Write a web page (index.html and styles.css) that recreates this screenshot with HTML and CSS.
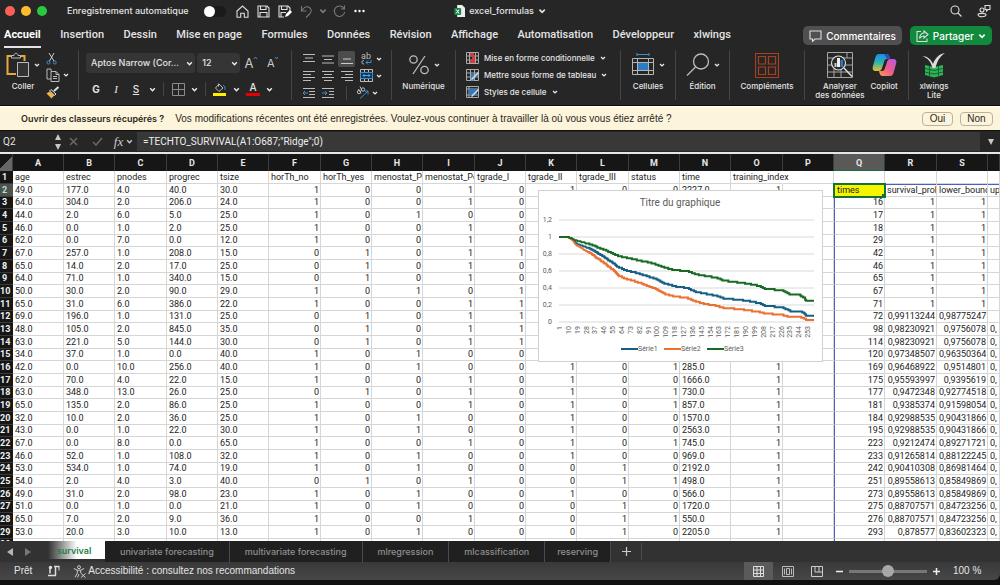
FILE: index.html
```html
<!DOCTYPE html>
<html lang="fr">
<head>
  <meta charset="UTF-8">
  <meta name="viewport" content="width=device-width, initial-scale=1.0">
  <title>excel_formulas</title>
  <link rel="stylesheet" href="styles.css">
</head>
<body>

  <!-- shared icons -->
  <svg class="sprite" aria-hidden="true">
    <symbol id="chev" viewBox="0 0 6 6"><path d="M1 2l2 2 2-2" fill="none" stroke="currentColor" stroke-width="1.2"/></symbol>
    <symbol id="lines-center" viewBox="0 0 14 12"><path d="M1 1.5h12M3 4.5h8M1 7.5h12M3 10.5h8" stroke="currentColor" fill="none"/></symbol>
    <symbol id="lines-left" viewBox="0 0 14 12"><path d="M1 1.5h12M1 4.5h8M1 7.5h12M1 10.5h8" stroke="currentColor" fill="none"/></symbol>
    <symbol id="lines-right" viewBox="0 0 14 12"><path d="M1 1.5h12M5 4.5h8M1 7.5h12M5 10.5h8" stroke="currentColor" fill="none"/></symbol>
  </svg>

  <header class="titlebar">
    <div class="lights"><span class="red"></span><span class="yellow"></span><span class="green"></span></div>
    <label for="autosave" class="autosave-label">Enregistrement automatique</label>
    <input type="checkbox" id="autosave" class="switch">
    <div class="quick">
      <button aria-label="Accueil"><svg width="13" height="13" viewBox="0 0 13 13"><path d="M1 6l5.500-5L12 6v6.300H8.300V8.200H4.700v4.100H1z"/></svg></button>
      <button aria-label="Enregistrer"><svg width="13" height="13" viewBox="0 0 13 13"><path d="M1 1h9l2 2v9H1zM3.500 1v3.500h5.500V1M3 12V7.500h7V12"/></svg></button>
      <button aria-label="Enregistrer sous"><svg width="14" height="13" viewBox="0 0 14 13"><path d="M6 12H1V1h9l2 2v3M3.500 1v3.500h5.500V1M3 12V7.500h5"/><path d="M7 12l1-3 4-4 2 2-4 4z" class="solid"/></svg></button>
      <button aria-label="Annuler" class="off"><svg width="13" height="13" viewBox="0 0 13 13"><path d="M1.500 1v5h5M1.500 6C4 2 7 1 9.500 2.500 12 4.500 11.500 7 9.500 9L6 12.500"/></svg></button>
      <button aria-label="Options d'annulation" class="off tight"><svg width="8" height="8"><use href="#chev"/></svg></button>
      <button aria-label="Rétablir" class="off"><svg width="13" height="13" viewBox="0 0 13 13"><path d="M11 3.500A5.200 5.200 0 1 0 11.700 7M11.500.500v3.500H8"/></svg></button>
      <button aria-label="Plus"><svg width="11" height="4" viewBox="0 0 11 4"><circle cx="1.500" cy="2" r="1.200" class="solid dot"/><circle cx="5.500" cy="2" r="1.200" class="solid dot"/><circle cx="9.500" cy="2" r="1.200" class="solid dot"/></svg></button>
    </div>
    <button class="doc">
      <svg width="11" height="12" viewBox="0 0 11 12"><path d="M3 0h5l3 3v9H3z" fill="#eee"/><rect y="3" width="7" height="7" rx="1" fill="#17864a"/><path d="M2 4.500l3 4M5 4.500l-3 4" stroke="#fff"/></svg>
      <span>excel_formulas</span>
      <svg width="8" height="8"><use href="#chev"/></svg>
    </button>
    <div class="title-tools">
      <button aria-label="Rechercher"><svg width="12" height="12" viewBox="0 0 12 12"><circle cx="5" cy="5" r="4"/><path d="M8 8l3.500 3.500"/></svg></button>
      <button aria-label="Compte"><svg width="14" height="14" viewBox="0 0 14 14"><circle cx="5" cy="6" r="2"/><path d="M1 10.500c0-1.500 8-1.500 8 0 0 3-8 3-8 0zM8 1.500h5v4h-2L9.500 7V5.500H8z"/></svg></button>
    </div>
  </header>

  <div class="menu">
    <nav>
      <a href="#" class="current">Accueil</a>
      <a href="#">Insertion</a>
      <a href="#">Dessin</a>
      <a href="#">Mise en page</a>
      <a href="#">Formules</a>
      <a href="#">Données</a>
      <a href="#">Révision</a>
      <a href="#">Affichage</a>
      <a href="#">Automatisation</a>
      <a href="#">Développeur</a>
      <a href="#">xlwings</a>
    </nav>
    <button class="comments"><svg width="13" height="12" viewBox="0 0 13 12"><path d="M1 1h11v8H6l-2.500 2.500V9H1z"/></svg>Commentaires</button>
    <button class="share"><svg width="13" height="12" viewBox="0 0 13 12"><path d="M5 1.500H1v10h10V8.500M8 1l4 3.500L8 8V6C5.500 6 4.500 7 3.500 8.500 4 5 5.500 3 8 3z"/></svg>Partager<svg width="8" height="8"><use href="#chev"/></svg></button>
  </div>

  <div class="ribbon">
    <section class="group g-clipboard">
      <button class="big">
        <span class="pic">
          <svg width="24" height="26" viewBox="0 0 24 26"><path d="M6 4H1.500v18H10M14 4h4.500v5" fill="none" stroke="#e5a93a" stroke-width="2"/><path d="M5.500 6V3.500h2.500C8 .500 12 .500 12 3.500h2.500V6z" fill="#262626" stroke="#bbb"/><path d="M11.500 10.500h11v14h-11z" fill="#333" stroke="#bbb"/></svg>
          <svg class="chev" width="6" height="6"><use href="#chev"/></svg>
        </span>
        <span>Coller</span>
      </button>
      <div class="stack">
        <button aria-label="Couper"><svg width="12" height="13" viewBox="0 0 12 13"><path d="M3 1l5 8M8 1L3.500 9" fill="none" stroke="#ccc"/><circle cx="2.500" cy="10.500" r="1.500" fill="none" stroke="#3c8fd0"/><circle cx="8.800" cy="10.500" r="1.500" fill="none" stroke="#3c8fd0"/></svg></button>
        <button aria-label="Copier"><svg width="14" height="14" viewBox="0 0 14 14"><path d="M5 3V1H1v10h4M5 3.500h5l3 3v7H5zM10 3.500v3h3M7 8.500h4M7 10.500h4" fill="none" stroke="#bbb"/></svg><svg class="chev" width="6" height="6"><use href="#chev"/></svg></button>
        <button aria-label="Reproduire la mise en forme"><svg width="14" height="13" viewBox="0 0 14 13"><path d="M12.500 1L8 5" stroke="#ddd" stroke-width="2"/><path d="M5 3.500l5 4.500-1.500 1.500-5-4.500z" fill="#333" stroke="#ddd"/><path d="M3.500 5.500L.500 7.500 5.500 12.500l3-3.500z" fill="#edb548"/></svg></button>
      </div>
    </section>

    <section class="group g-font">
      <div class="line">
        <div class="combo wide">
          <select aria-label="Police"><option>Aptos Narrow (Cor...</option></select>
          <svg class="chev" width="7" height="7"><use href="#chev"/></svg>
        </div>
        <div class="combo">
          <select aria-label="Taille"><option>12</option></select>
          <svg class="chev" width="7" height="7"><use href="#chev"/></svg>
        </div>
        <button class="glyph grow" aria-label="Agrandir la police">A<svg width="5" height="5" viewBox="0 0 5 5"><path d="M1 3l1.500-2L4 3" fill="none" stroke="#3c8fd0"/></svg></button>
        <button class="glyph shrink" aria-label="Réduire la police">A<svg width="5" height="5" viewBox="0 0 5 5"><path d="M1 1l1.500 2L4 1" fill="none" stroke="#3c8fd0"/></svg></button>
      </div>
      <div class="line styles">
        <button class="bold">G</button>
        <button class="ital">I</button>
        <button class="under">S</button>
        <svg class="chev" width="7" height="7"><use href="#chev"/></svg>
        <i class="bar"></i>
        <button aria-label="Bordures"><svg width="13" height="13" viewBox="0 0 13 13"><path d="M.500.500h12v12H.500zM6.500.500v12M.500 6.500h12" fill="none" stroke="#8c8c8c"/></svg></button>
        <svg class="chev" width="7" height="7"><use href="#chev"/></svg>
        <i class="bar"></i>
        <button aria-label="Couleur de remplissage"><svg width="14" height="14" viewBox="0 0 14 14"><path d="M6 2l4 4-4 3.500L2.500 6zM5.500 1.500v3" fill="none" stroke="#bbb"/><path d="M10 3c2 1 2 3 2 5" fill="none" stroke="#3c8fd0"/><path d="M0 11h13v3H0z" fill="#ffef00"/></svg></button>
        <svg class="chev" width="7" height="7"><use href="#chev"/></svg>
        <button class="font-color" aria-label="Couleur de police">A</button>
        <svg class="chev" width="7" height="7"><use href="#chev"/></svg>
      </div>
    </section>

    <section class="group g-align">
      <button aria-label="Aligner en haut"><svg width="14" height="12" viewBox="0 0 14 12"><path d="M1 1.500h12M3 5h8M1 8.500h12" stroke="#bbb"/></svg></button>
      <button aria-label="Aligner au milieu"><svg width="14" height="12" viewBox="0 0 14 12"><path d="M1 3h12M3 6.500h8M1 10h12" stroke="#bbb"/></svg></button>
      <button class="pressed" aria-label="Aligner en bas"><svg width="14" height="14" viewBox="0 0 14 14"><path d="M3 7h8M1 11.500h12" stroke="#ccc"/></svg></button>
      <button aria-label="Renvoyer à la ligne" class="wrap">ab<svg width="12" height="5" viewBox="0 0 12 5"><path d="M4 .500c-3 0-3 3.500 0 3.500" fill="none" stroke="#bbb"/><path d="M11 0v2.500H6M8 .500l-2 2 2 2" fill="none" stroke="#3c8fd0"/></svg></button>
      <svg class="chev" width="6" height="6"><use href="#chev"/></svg>

      <button aria-label="Aligner à gauche"><svg width="14" height="12"><use href="#lines-left"/></svg></button>
      <button aria-label="Centrer"><svg width="14" height="12"><use href="#lines-center"/></svg></button>
      <button aria-label="Aligner à droite"><svg width="14" height="12"><use href="#lines-right"/></svg></button>
      <button aria-label="Fusionner"><svg width="13" height="13" viewBox="0 0 13 13"><path d="M.500.500h12v12H.500zM4.500.500v3M8.500.500v3M4.500 9.500v3M8.500 9.500v3" fill="none" stroke="#bbb"/><path d="M.500 3.500h12v6H.500z" fill="#17354d" stroke="#3c8fd0"/><path d="M3 6.500h7M4.500 5L3 6.500 4.500 8M8.500 5L10 6.500 8.500 8" fill="none" stroke="#4aa3e6"/></svg></button>
      <svg class="chev" width="6" height="6"><use href="#chev"/></svg>

      <button aria-label="Diminuer le retrait"><svg width="14" height="12" viewBox="0 0 14 12"><path d="M1 1.500h12M7 4.500h6M7 7.500h6M1 10.500h12" stroke="#bbb"/><path d="M1 6h5M3 4L1 6l2 2" fill="none" stroke="#3c8fd0"/></svg></button>
      <button aria-label="Augmenter le retrait"><svg width="14" height="12" viewBox="0 0 14 12"><path d="M1 1.500h12M8 4.500h5M8 7.500h5M1 10.500h12" stroke="#bbb"/><path d="M1 6h5M4 4l2 2-2 2" fill="none" stroke="#3c8fd0"/></svg></button>
      <i class="bar"></i>
      <button aria-label="Orientation" class="orient"><svg width="13" height="13" viewBox="0 0 13 13"><g fill="none" stroke="#bbb"><circle cx="3" cy="6" r="1.700"/><path d="M2.500 3l2.500 4.500"/><circle cx="7" cy="3.500" r="1.700"/><path d="M4 .500l2 4"/></g><path d="M4 12.500L12 5M8.500 5H12v3.500" fill="none" stroke="#3c8fd0"/></svg><svg class="chev" width="6" height="6"><use href="#chev"/></svg></button>
    </section>

    <section class="group g-number">
      <button class="big">
        <span class="pic"><svg width="22" height="22" viewBox="0 0 22 22"><g fill="none" stroke="#bdbdbd" stroke-width="1.300"><circle cx="5.500" cy="5.500" r="3.700"/><circle cx="16.500" cy="16" r="3.700"/><path d="M17 2L5 20"/></g></svg>
          <svg class="chev" width="6" height="6"><use href="#chev"/></svg></span>
        <span>Numérique</span>
      </button>
    </section>

    <section class="group g-styles">
      <button><svg width="13" height="12" viewBox="0 0 13 12"><path d="M.500.500h12v11H.500zM.500 4h12M.500 8h12M3.500.500v11M9.500.500v11" fill="none" stroke="#aaa"/><path d="M4 1h4v3H4zM6 4h3v4H6zM4 8h5v3H4z" fill="#d33b3f"/></svg>Mise en forme conditionnelle<svg class="chev" width="6" height="6"><use href="#chev"/></svg></button>
      <button><svg width="13" height="12" viewBox="0 0 13 12"><path d="M.500.500h12v11H.500zM.500 4h12M.500 8h12M4.500.500v11M8.500.500v11" fill="none" stroke="#aaa"/><path d="M5 4.500h3V8H5zM9 4.500h3V8H9zM5 8.500h3v3H5z" fill="#2b7cc4"/><path d="M12.500 3.500l-7 7" stroke="#ddd" stroke-width="1.500"/></svg>Mettre sous forme de tableau<svg class="chev" width="6" height="6"><use href="#chev"/></svg></button>
      <button><svg width="13" height="12" viewBox="0 0 13 12"><path d="M.500.500h12v11H.500zM.500 3h12M.500 9h12M3 .500v11" fill="none" stroke="#aaa"/><path d="M3 3h8v6H3z" fill="#2b7cc4"/><path d="M12.500 3.500l-7 7" stroke="#ddd" stroke-width="1.500"/></svg>Styles de cellule<svg class="chev" width="6" height="6"><use href="#chev"/></svg></button>
    </section>

    <section class="group g-cells">
      <button class="big">
        <span class="pic"><svg width="24" height="24" viewBox="0 0 24 24"><path d="M6 1.500h12M6 0v3M18 0v3" fill="none" stroke="#3c8fd0"/><path d="M1.500 5.500h21v16h-21zM1.500 9.500h21M1.500 17.500h21M6.500 5.500v16M17.500 5.500v16" fill="none" stroke="#b5b5b5"/><path d="M7 10h10v7H7z" fill="#2b7cc4"/></svg>
          <svg class="chev" width="6" height="6"><use href="#chev"/></svg></span>
        <span>Cellules</span>
      </button>
    </section>

    <section class="group g-edit">
      <button class="big">
        <span class="pic"><svg width="24" height="24" viewBox="0 0 24 24"><circle cx="15" cy="8.500" r="7.500" fill="none" stroke="#bdbdbd" stroke-width="1.300"/><path d="M9.500 14L1 22.500" stroke="#bdbdbd" stroke-width="1.300"/></svg>
          <svg class="chev" width="6" height="6"><use href="#chev"/></svg></span>
        <span>Édition</span>
      </button>
    </section>

    <section class="group g-addins">
      <button class="big">
        <span class="pic"><svg width="24" height="25" viewBox="0 0 24 25"><path d="M.500.500h23v24H.500zM3.500 3.500h7v7.500h-7zM13.500 3.500h7v7.500h-7zM3.500 14h7v7.500h-7zM13.500 14h7v7.500h-7z" fill="none" stroke="#a8401f" stroke-width="1.200"/></svg></span>
        <span>Compléments</span>
      </button>
    </section>

    <section class="group g-analyse">
      <button class="big">
        <span class="pic"><svg width="26" height="26" viewBox="0 0 26 26"><path d="M.500.500h25v25H.500zM.500 6h25M.500 13h25M.500 20h25M7 13v13M14 18v8M20 0v6" fill="none" stroke="#a5a5a5"/><circle cx="11.500" cy="11" r="7" fill="#2b2b2b" stroke="#ddd" stroke-width="1.200"/><path d="M7.500 11h2v4h-2z" fill="#ccc"/><path d="M10 6h3v9h-3z" fill="#eee"/><path d="M13.500 8h2.500v7h-2.500z" fill="#2b7cc4"/><path d="M17 16l8 8.500" stroke="#ddd" stroke-width="1.500"/></svg></span>
        <span>Analyser<br>des données</span>
      </button>
      <button class="big">
        <span class="pic"><svg width="25" height="24" viewBox="0 0 25 24">
          <defs>
            <linearGradient id="cp1" x1="0" y1="0" x2="0" y2="1"><stop offset="0" stop-color="#1c8de8"/><stop offset=".5" stop-color="#29b6b0"/><stop offset="1" stop-color="#e9c02c"/></linearGradient>
            <linearGradient id="cp2" x1="1" y1="0" x2="0" y2="1"><stop offset="0" stop-color="#b457e8"/><stop offset=".5" stop-color="#ee5a8d"/><stop offset="1" stop-color="#fb9a4a"/></linearGradient>
          </defs>
          <path d="M7 1h7.500c2 0 2.500 1.500 3 3l.500 2h-3c-2 0-2.500 1-3 3l-2 6c-.500 2-1.500 3-3.500 3H4c-3 0-4-2-3-5L3.500 4C4.200 2 5 1 7 1z" fill="url(#cp1)"/>
          <path d="M18 23h-7.500c-2 0-2.500-1.500-3-3L7 18h3c2 0 2.500-1 3-3l2-6c.500-2 1.500-3 3.500-3H21c3 0 4 2 3 5l-2.500 9c-.700 2-1.500 3-3.500 3z" fill="url(#cp2)"/>
          <path d="M12 1h3c1.500 0 2 1.500 2.500 3l.500 2h-3z" fill="#2451c9"/>
        </svg></span>
        <span>Copilot</span>
      </button>
    </section>

    <section class="group g-xlwings">
      <button class="big">
        <span class="pic"><svg width="24" height="25" viewBox="0 0 24 25"><path d="M3 12l9 2 9-2v10l-9 2.500L3 22z" fill="#2db457"/><path d="M3 15.500l9 2 9-2M3 19l9 2 9-2M7.500 13v11M16.500 13v11" fill="none" stroke="#17612f"/><path d="M0 3c5 0 9 3 11 8 2-6 6-10 12-11-6 4-8 9-9.500 15h-3C9 9 6 5 0 3z" fill="#dcdcdc"/></svg></span>
        <span>xlwings<br>Lite</span>
      </button>
    </section>
  </div>

  <div class="banner">
    <strong>Ouvrir des classeurs récupérés ?</strong>
    <span>Vos modifications récentes ont été enregistrées. Voulez-vous continuer à travailler là où vous vous étiez arrêté ?</span>
    <button>Oui</button>
    <button>Non</button>
  </div>

  <div class="formula-bar">
    <input class="name-box" aria-label="Zone de nom" value="Q2">
    <svg width="6" height="16" viewBox="0 0 6 16"><path d="M3 0l3 6H0zM3 16l3-6H0z" fill="#c8c8c8"/></svg>
    <button aria-label="Annuler"><svg width="9" height="9" viewBox="0 0 9 9"><path d="M1 1l7 7M8 1L1 8" stroke="#686868" stroke-width="1.500"/></svg></button>
    <button aria-label="Valider"><svg width="11" height="9" viewBox="0 0 11 9"><path d="M1 5l3 3 6-7" fill="none" stroke="#686868" stroke-width="1.500"/></svg></button>
    <button class="fx">fx<svg width="7" height="7"><use href="#chev"/></svg></button>
    <input class="formula" aria-label="Formule" value='=TECHTO_SURVIVAL(A1:O687;"Ridge";0)'>
    <button class="expand" aria-label="Développer"><svg width="6" height="6" viewBox="0 0 6 6"><path d="M0 0h6L3 6z" fill="#c8c8c8"/></svg></button>
  </div>

  <main class="sheet">
    <table>
      <thead><tr id="columns"></tr></thead>
      <tbody id="rows"></tbody>
    </table>
    <svg id="chart" class="chart" viewBox="0 0 283 170" role="img" aria-label="Titre du graphique"></svg>
  </main>

  <div class="sheet-tabs">
    <div class="arrows">
      <button aria-label="Précédent"><svg width="6" height="8" viewBox="0 0 6 8"><path d="M6 0v8L0 4z" fill="#b5b5b5"/></svg></button>
      <button aria-label="Suivant"><svg width="6" height="8" viewBox="0 0 6 8"><path d="M0 0v8l6-4z" fill="#777"/></svg></button>
    </div>
    <button class="tab active">survival</button>
    <button class="tab">univariate forecasting</button>
    <button class="tab">multivariate forecasting</button>
    <button class="tab">mlregression</button>
    <button class="tab">mlcassification</button>
    <button class="tab last">reserving</button>
    <button class="add" aria-label="Nouvelle feuille"><svg width="9" height="9" viewBox="0 0 9 9"><path d="M4.500 0v9M0 4.500h9" stroke="#ccc" stroke-width="1.200"/></svg></button>
  </div>

  <footer class="status">
    <span>Prêt</span>
    <svg class="macro" width="12" height="12" viewBox="0 0 12 12"><path d="M2 2.500v6M0 10.500h8M6 1.500h5.500M7.500 2v8.500" fill="none" stroke="#ddd" stroke-width="1.500"/><circle cx="2.500" cy="2.500" r="1.700" fill="#ddd"/><path d="M11 1.500v4" stroke="#ddd"/></svg>
    <svg width="13" height="13" viewBox="0 0 13 13"><g fill="none" stroke="#ccc"><circle cx="6" cy="2.200" r="1.500"/><path d="M.800 3.500l3.500 1.700v3L2 12.200M11.200 3.500L7.700 5.200v3M4.300 5.200h3.400M6 9l-1.500 3.500M8 8.500l4.500 4M12.500 8.500l-4.500 4"/></g></svg>
    <span class="access">Accessibilité : consultez nos recommandations</span>
    <div class="views">
      <button class="on" aria-label="Normal"><svg width="11" height="11" viewBox="0 0 11 11"><path d="M.500.500h10v10H.500zM.500 4h10M.500 7.500h10M4 .500v10M7.500.500v10" fill="none" stroke="#ddd"/></svg></button>
      <button aria-label="Mise en page"><svg width="12" height="11" viewBox="0 0 12 11"><path d="M.500.500h11v10H.500zM2.500 2.500v6M9.500 2.500v6M4.500 2.500h3v6h-3z" fill="none" stroke="#bbb"/></svg></button>
      <button aria-label="Sauts de page"><svg width="12" height="11" viewBox="0 0 12 11"><path d="M.500.500h11v10H.500zM4 .500V6h4V.500M8 6h3.500" fill="none" stroke="#ccc"/></svg></button>
    </div>
    <button class="zoom-btn" aria-label="Zoom arrière"><svg width="7" height="7" viewBox="0 0 7 7"><path d="M0 3.500h7" stroke="#eee" stroke-width="1.500"/></svg></button>
    <input type="range" class="zoom" aria-label="Zoom" min="0" max="100" value="50">
    <button class="zoom-btn" aria-label="Zoom avant"><svg width="7" height="7" viewBox="0 0 7 7"><path d="M0 3.500h7M3.500 0v7" stroke="#eee" stroke-width="1.500"/></svg></button>
    <span class="percent">100 %</span>
  </footer>

  <script src="script.js"></script>
</body>
</html>
```
FILE: styles.css
```css
:root {
  --chrome: #262626;
  --line: #444;
  --text: #e4e4e4;
  --icon: #bbb;
  --grid: #d6d6d6;
  --green: #15703c;
  --ui: Inter, "Liberation Sans", sans-serif;
  --cell: Roboto, "Liberation Sans", sans-serif;
}

* {
  box-sizing: border-box;
}

body {
  display: flex;
  flex-direction: column;
  height: 100vh;
  margin: 0;
  padding-bottom: 5px;
  overflow: hidden;
  background: #101010;
  color: var(--text);
  font: 500 9px/12px var(--ui);
}

button, input, select {
  margin: 0;
  padding: 0;
  border: 0;
  background: none;
  color: inherit;
  font: inherit;
}

button {
  display: flex;
  align-items: center;
  justify-content: center;
  white-space: nowrap;
}

svg {
  flex: none;
  display: block;
}

.sprite {
  position: absolute;
  width: 0;
  height: 0;
}

/* title bar */
.titlebar {
  position: relative;
  display: flex;
  align-items: center;
  height: 22px;
  flex: none;
  padding: 0 9px 0 5px;
  background: var(--chrome);
}

.lights {
  display: flex;
  gap: 6px;
  width: 62px;
}

.lights span {
  width: 10px;
  height: 10px;
  border-radius: 50%;
}

.red { background: #fe5f57; }
.yellow { background: #febc2e; }
.green { background: #28c840; }

.autosave-label {
  width: 137px;
}

.switch {
  appearance: none;
  width: 22px;
  height: 11px;
  border-radius: 6px;
  background: #1a1a1a;
}

.switch::before {
  content: "";
  display: block;
  width: 11px;
  height: 11px;
  border-radius: 50%;
  background: #fff;
}

.quick, .title-tools {
  display: flex;
  align-items: center;
  gap: 8px;
  margin-left: 10px;
}

.quick svg, .title-tools svg, .menu button svg {
  fill: none;
  stroke: #ddd;
  stroke-width: 1.1;
}

.quick .solid {
  fill: #fff;
  stroke: none;
}

.quick .off {
  opacity: .45;
}

.quick .tight {
  margin: 0 -2px;
}

.doc {
  position: absolute;
  left: 50%;
  transform: translateX(-50%);
  gap: 4px;
}

.title-tools {
  gap: 15px;
  margin-left: auto;
}

/* menu */
.menu {
  display: flex;
  align-items: center;
  justify-content: flex-end;
  height: 26px;
  flex: none;
  padding: 1px 8px 0 4px;
  gap: 8px;
  background: var(--chrome);
}

.menu nav {
  display: flex;
  justify-content: space-between;
  flex: 1;
  max-width: 727px;
  margin-right: auto;
}

.menu a {
  padding: 4px 0;
  border-bottom: 2px solid transparent;
  color: var(--text);
  font: 500 11px/14px var(--cell);
  text-decoration: none;
}

.menu .current {
  border-color: #e8dfe8;
  color: #fff;
  font-weight: 700;
}

.menu button {
  height: 19px;
  gap: 4px;
  padding: 0 6px;
  border-radius: 5px;
  background: #505050;
  color: #fff;
  font-size: 10px;
}

.menu .share {
  background: #118a3e;
}

/* ribbon */
.ribbon {
  display: flex;
  height: 58px;
  flex: none;
  padding-top: 2px;
  border-bottom: 1px solid #0c0c0c;
  background: var(--chrome);
  font-size: 8px;
  line-height: 9px;
}

.group {
  display: flex;
  justify-content: center;
  height: 50px;
  flex: none;
  border-right: 1px solid var(--line);
}

.group:last-child {
  border: 0;
}

.chev {
  color: #eee;
}

.big {
  flex-direction: column;
  justify-content: flex-start;
  gap: 2px;
}

.pic {
  display: flex;
  align-items: center;
  gap: 4px;
  height: 30px;
}

.bar {
  width: 1px;
  height: 14px;
  background: var(--line);
}

.g-clipboard { width: 79px; gap: 6px; }
.g-font { width: 213px; }
.g-align { width: 100px; }
.g-number { width: 64px; }
.g-styles { width: 165px; }
.g-cells { width: 55px; }
.g-edit { width: 54px; }
.g-addins { width: 75px; }
.g-analyse { width: 104px; gap: 6px; }
.g-xlwings { width: 50px; }

.stack {
  display: flex;
  flex-direction: column;
  justify-content: space-between;
  width: 26px;
}

.stack button {
  justify-content: flex-start;
  gap: 3px;
  height: 16px;
}

.g-font {
  flex-direction: column;
  justify-content: flex-start;
  gap: 6px;
  padding: 3px 8px 0 7px;
}

.line {
  display: flex;
  align-items: center;
  gap: 2px;
  height: 20px;
}

.combo {
  display: flex;
  align-items: center;
  width: 43px;
  height: 20px;
  padding-right: 2px;
  border-radius: 3px;
  background: #353535;
}

.combo.wide {
  width: 111px;
}

.combo select {
  appearance: none;
  flex: 1;
  min-width: 0;
  padding-left: 5px;
  font-size: 9px;
  line-height: 18px;
}

.glyph {
  align-items: flex-start;
  width: 20px;
  color: #ccc;
  font-size: 13px;
  line-height: 14px;
  font-weight: 400;
}

.glyph.shrink {
  font-size: 11px;
}

.styles {
  gap: 6px;
  padding-left: 3px;
}

.styles button {
  width: 14px;
  font-size: 10px;
}

.styles .bar {
  margin: 0 1px;
}

.bold { font-weight: 700; }
.styles .ital { font: italic 400 11px/12px "Liberation Serif", serif; }
.under { text-decoration: underline; }

.styles .font-color {
  height: 14px;
  border-bottom: 3px solid #e60000;
}

.g-align {
  display: grid;
  grid-template-columns: 19px 19px 19px 20px 6px;
  grid-template-rows: 17px 17px 17px;
  place-items: center;
  justify-content: start;
  padding-left: 7px;
  color: var(--icon);
}

.g-align .pressed {
  width: 17px;
  height: 16px;
  border-radius: 2px;
  background: #4c4c4c;
}

.g-align .wrap {
  flex-direction: column;
  font: 9px/8px var(--cell);
}

.g-align .orient {
  grid-column: span 2;
  justify-self: start;
  gap: 3px;
}

.g-styles {
  flex-direction: column;
  align-items: flex-start;
  justify-content: space-between;
  padding-left: 10px;
}

.g-styles button {
  gap: 5px;
  height: 16px;
}

/* recovery banner */
.banner {
  display: flex;
  align-items: center;
  height: 24px;
  flex: none;
  gap: 7px;
  padding: 0 7px 0 21px;
  border-top: 1px solid #fff;
  background: #fdf4dc;
  color: #2b2820;
  font: 10px/12px "Liberation Sans", sans-serif;
}

.banner strong {
  padding-right: 4px;
  font: 600 9px/12px var(--ui);
}

.banner span {
  flex: 1;
}

.banner button {
  width: 31px;
  height: 14px;
  border: 1px solid #b9b2a0;
  border-radius: 4px;
}

.banner button + button {
  width: 33px;
}

/* formula bar */
.formula-bar {
  display: flex;
  align-items: center;
  height: 24px;
  flex: none;
  border-top: 1px solid #111;
  border-bottom: 2px solid #e6e6e6;
  background: var(--chrome);
}

.name-box {
  width: 55px;
  padding-left: 3px;
  font: 10px/14px var(--cell);
}

.formula-bar button {
  width: 23px;
  margin-left: 1px;
}

.formula-bar .fx {
  gap: 3px;
  width: 27px;
  color: #ccc;
  font: italic 13px/14px "Liberation Serif", serif;
}

.formula {
  flex: 1;
  height: 19px;
  padding-left: 6px;
  background: #383838;
  color: #eee;
  font: 10px/14px var(--cell);
}

.formula-bar .expand {
  width: 19px;
}

/* sheet */
.sheet {
  position: relative;
  flex: 1;
  min-height: 0;
  overflow: hidden;
  background: #fff;
  color: #1c1c1c;
  font: 9px/12px var(--cell);
}

table {
  width: 100%;
  border-spacing: 0;
  table-layout: fixed;
}

th, td {
  padding: 0;
  overflow: hidden;
  white-space: nowrap;
}

thead th {
  width: 51px;
  height: 17px;
  border-right: 1px solid #3d3d3d;
  background: #161616;
  color: #e8e8e8;
  font-weight: 700;
}

thead th:nth-child(3n+1) {
  width: 52px;
}

thead th:first-child {
  width: 13px;
  background: linear-gradient(135deg, #161616 50%, #666 50%);
}

thead th:last-child {
  width: auto;
}

thead .picked {
  box-shadow: inset 0 -1px var(--green);
  background: #595959;
}

tbody th {
  padding-right: 4px;
  border-bottom: 1px solid #3a3a3a;
  background: #161616;
  color: #f0f0f0;
  font-weight: 700;
}

tbody .picked {
  background: #4a5550;
  color: #c8d8cf;
}

tbody tr {
  height: 13px;
}

tbody tr:nth-child(3n) {
  height: 12px;
}

tbody tr:nth-child(3n) > * {
  line-height: 11px;
}

td {
  padding: 0 1px 0 2px;
  border-right: 1px solid var(--grid);
  border-bottom: 1px solid var(--grid);
}

.num {
  text-align: right;
}

.clear {
  border-right-color: transparent;
}

.spill {
  overflow: visible;
}

.range-left {
  border-left: 1px solid #4a5fc4;
}

.range-top {
  box-shadow: inset 0 1px #4a5fc4;
}

.selected {
  position: relative;
  overflow: visible;
  border-color: transparent;
  outline: 2px solid var(--green);
  outline-offset: -1px;
  background: #f5f500;
}

.selected::after {
  content: "";
  position: absolute;
  right: -2px;
  bottom: -2px;
  width: 4px;
  height: 4px;
  background: var(--green);
}

.chart {
  position: absolute;
  left: 538px;
  top: 36px;
  width: 285px;
  height: 172px;
  border: 1px solid #d0d0d0;
  background: #fff;
}

.chart text {
  fill: #5c5c5c;
  font-size: 7px;
}

.chart .title {
  font-size: 10px;
}

.chart polyline {
  fill: none;
  stroke-width: 2;
}

/* sheet tabs */
.sheet-tabs {
  display: flex;
  align-items: center;
  height: 21px;
  flex: none;
  background: #323232;
}

.arrows {
  display: flex;
  gap: 12px;
  width: 43px;
  padding-left: 7px;
}

.tab {
  height: 21px;
  padding: 0 15px;
  border-right: 1px solid #4a4a4a;
  background: #202020;
  color: #8f8f8f;
}

.tab.last {
  padding: 0 12px;
}

.tab.active {
  width: 62px;
  height: 18px;
  align-self: flex-start;
  padding: 1px 0 0;
  border: 0;
  background: linear-gradient(90deg, #323232 8%, #fff 55%);
  color: #1b8049;
  font-weight: 600;
}

.add {
  width: 31px;
  height: 17px;
  border-right: 1px solid #4a4a4a;
}

/* status bar */
.status {
  display: flex;
  align-items: center;
  height: 18px;
  flex: none;
  padding: 0 19px 0 14px;
  border-radius: 0 0 6px 0;
  background: linear-gradient(#393939, #474747);
  font: 10px/12px "Liberation Sans", sans-serif;
}

.macro {
  margin: 0 13px 0 16px;
}

.access {
  flex: 1;
  margin-left: 2px;
}

.views {
  display: flex;
  margin-right: 5px;
}

.views button {
  width: 29px;
  height: 18px;
}

.views .on {
  background: #5a5a5a;
}

.zoom {
  appearance: none;
  width: 78px;
  height: 12px;
  margin: 0 6px;
  background: linear-gradient(#777, #777) center / 100% 3px no-repeat;
}

.zoom::-webkit-slider-thumb {
  appearance: none;
  width: 12px;
  height: 12px;
  border-radius: 50%;
  background: #a8a8a8;
}

.percent {
  width: 28px;
  margin-left: 13px;
  white-space: nowrap;
}
```
FILE: script.js
```js
const letters = "ABCDEFGHIJKLMNOPQRST".split("");

// one line per sheet row, columns A to O
const patients = `
age estrec pnodes progrec tsize horTh_no horTh_yes menostat_Pre menostat_Post tgrade_I tgrade_II tgrade_III status time training_index
49.0 177.0 4.0 40.0 30.0 1 0 0 1 0 1 0 0 2227.0 1
64.0 304.0 2.0 206.0 24.0 1 0 0 1 0
44.0 2.0 6.0 5.0 25.0 1 0 1 0 0
46.0 0.0 1.0 2.0 25.0 1 0 0 1 0
62.0 0.0 7.0 0.0 12.0 1 0 0 1 0
67.0 257.0 1.0 208.0 15.0 0 1 0 1 1
65.0 14.0 2.0 17.0 25.0 0 1 0 1 0
64.0 71.0 1.0 340.0 15.0 0 1 0 1 0
50.0 30.0 2.0 90.0 29.0 1 0 1 0 1
65.0 31.0 6.0 386.0 22.0 1 0 0 1 1
69.0 196.0 1.0 131.0 25.0 0 1 0 1 1
48.0 105.0 2.0 845.0 35.0 0 1 0 1 1
63.0 221.0 5.0 144.0 30.0 0 1 0 1 1
34.0 37.0 1.0 0.0 40.0 1 0 1 0 0
42.0 0.0 10.0 256.0 40.0 1 0 1 0 0 1 0 1 285.0 1
62.0 70.0 4.0 22.0 15.0 1 0 0 1 0 1 0 0 1666.0 1
63.0 348.0 13.0 26.0 25.0 0 1 0 1 0 1 0 1 730.0 1
65.0 135.0 2.0 86.0 25.0 1 0 0 1 0 1 0 1 857.0 1
32.0 10.0 2.0 36.0 25.0 1 0 1 0 0 1 0 0 1570.0 1
43.0 0.0 1.0 22.0 30.0 1 0 1 0 0 1 0 0 2563.0 1
67.0 0.0 8.0 0.0 65.0 1 0 0 1 0 1 0 1 745.0 1
46.0 52.0 1.0 108.0 32.0 1 0 1 0 0 1 0 0 969.0 1
53.0 534.0 1.0 74.0 19.0 1 0 1 0 0 0 1 0 2192.0 1
54.0 2.0 4.0 3.0 40.0 0 1 0 1 0 0 1 1 498.0 1
49.0 31.0 2.0 98.0 23.0 1 0 1 0 0 1 0 0 566.0 1
51.0 0.0 1.0 0.0 21.0 1 0 1 0 0 0 1 0 1720.0 1
65.0 7.0 2.0 9.0 36.0 1 0 0 1 0 0 1 1 550.0 1
53.0 20.0 3.0 10.0 13.0 1 0 1 0 0 0 1 0 2205.0 1
`.trim().split("\n").map(l => l.split(" "));

// spilled result, columns Q to T, starts on row 2
const result = `
times survival_prob lower_bound upper_bound
16 1 1
17 1 1
18 1 1
29 1 1
42 1 1
46 1 1
65 1 1
67 1 1
71 1 1
72 0,99113244 0,98775247
98 0,98230921 0,9756078 0,
114 0,98230921 0,9756078 0,
120 0,97348507 0,96350364 0,
169 0,96468922 0,9514801 0,
175 0,95593997 0,9395619 0,
177 0,9472348 0,92774518 0,
181 0,9385374 0,91598054 0,
184 0,92988535 0,90431866 0,
195 0,92988535 0,90431866 0,
223 0,9212474 0,89271721 0,
233 0,91265814 0,88122245 0,
242 0,90410308 0,86981464 0,
251 0,89558613 0,85849869 0,
273 0,89558613 0,85849869 0,
275 0,88707571 0,84723256 0,
276 0,88707571 0,84723256 0,
293 0,878577 0,83602323 0,
`.trim().split("\n").map(l => l.split(" "));

document.getElementById("columns").innerHTML = "<th></th>" +
  letters.map(l => `<th${l === "Q" ? ' class="picked"' : ""}>${l === "T" ? "" : l}</th>`).join("");

let html = "";
for (let r = 1; r <= 30; r++) {
  html += `<tr><th${r === 2 ? ' class="picked"' : ""}>${r}</th>`;
  letters.forEach((l, c) => {
    const value = c < 16 ? patients[r - 1]?.[c] : result[r - 2]?.[c - 16];
    const cls = [];
    if (/^[\d,]+$/.test(value || "") && l !== "T") cls.push("num");
    if (l === "Q" && r > 1) cls.push("range-left");
    if (c > 15 && r === 2) cls.push("range-top");
    if (l === "Q" && r === 2) cls.push("selected");
    if (value === "training_index") cls.push("spill", "clear");
    html += `<td class="${cls.join(" ")}">${value || ""}</td>`;
  });
  html += "</tr>";
}
document.getElementById("rows").innerHTML = html;

// chart
const ranks = [0, 9, 13, 18, 25, 30, 38, 45, 54, 60, 69, 81, 89, 99, 108, 118, 130, 139, 150, 160, 167, 187, 203, 209, 226, 235, 244, 249, 251, 259];
const series = [
  { name: "Série1", color: "#156082", values: [1, 1, .98, .92, .89, .87, .82, .77, .7, .645, .605, .57, .54, .505, .45, .42, .4, .355, .33, .31, .28, .255, .225, .19, .175, .13, .13, .105, .08, .08] },
  { name: "Série2", color: "#e97132", values: [1, 1, .97, .905, .855, .825, .755, .7, .62, .545, .505, .465, .43, .387, .33, .3, .285, .24, .21, .19, .168, .145, .12, .1, .086, .06, .06, .043, .027, .027] },
  { name: "Série3", color: "#196b24", values: [1, 1, .985, .957, .935, .92, .885, .855, .81, .777, .755, .725, .707, .676, .637, .61, .6, .56, .54, .52, .488, .46, .426, .39, .375, .32, .32, .285, .246, .246] }
];

const x = i => 20 + i * 255 / 259;
const y = v => 131 - v * 85;

function valueAt(values, i) {
  const k = ranks.findIndex(r => r >= i);
  if (k <= 0) return values[0];
  const t = (i - ranks[k - 1]) / (ranks[k] - ranks[k - 1]);
  return values[k - 1] + t * (values[k] - values[k - 1]);
}

let svg = '<text class="title" x="141" y="15" text-anchor="middle">Titre du graphique</text>';
for (let i = 0; i <= 6; i++) {
  const v = i / 5;
  svg += `<line x1="20" x2="275" y1="${y(v)}" y2="${y(v)}" stroke="#d9d9d9"/>`;
  svg += `<text x="13" y="${y(v) + 2}" text-anchor="end">${String(v).replace(".", ",")}</text>`;
}
for (let n = 1; n <= 253; n += 9) {
  svg += `<text transform="translate(${x(n - 1) + 3} 135) rotate(-90)" text-anchor="end">${n}</text>`;
}
series.forEach((s, k) => {
  let last = 1;
  let points = "";
  for (let i = 0; i <= 259; i++) {
    const v = Math.round(valueAt(s.values, i) * 80) / 80;
    if (i > 30 && v !== last) points += `${x(i)},${y(last)} `;
    points += `${x(i)},${y(v)} `;
    last = v;
  }
  svg += `<polyline points="${points}" stroke="${s.color}"/>`;
  const lx = 82 + k * 43;
  svg += `<line x1="${lx}" x2="${lx + 17}" y1="158" y2="158" stroke="${s.color}" stroke-width="2"/>`;
  svg += `<text x="${lx + 17}" y="160">${s.name}</text>`;
});
document.getElementById("chart").innerHTML = svg;
```
